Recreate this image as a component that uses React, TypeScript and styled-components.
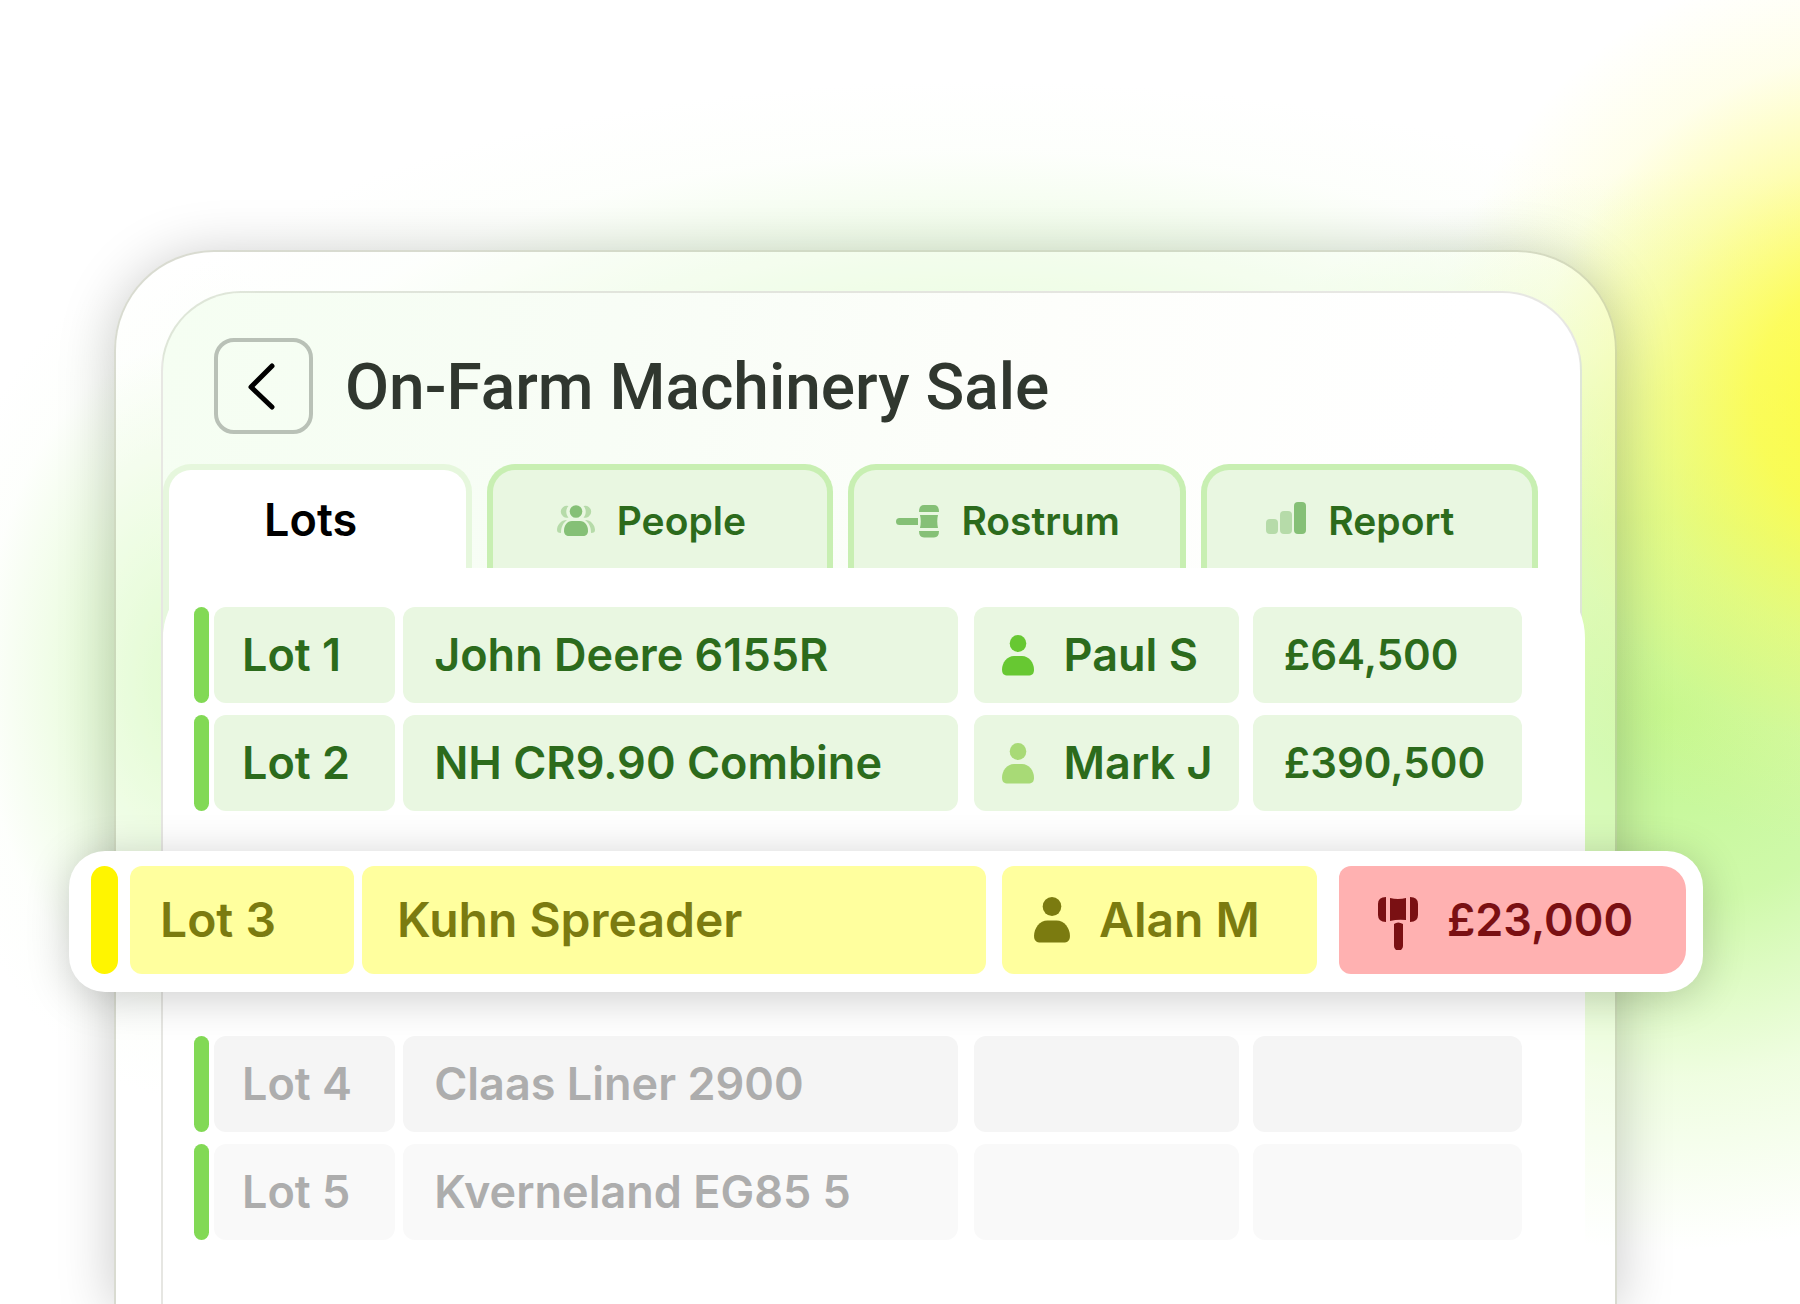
import React from "react";
import styled, { createGlobalStyle, css } from "styled-components";

const GlobalStyle = createGlobalStyle`
  *, *::before, *::after { box-sizing: border-box; }
  html, body { margin: 0; background: #fff; }
  body { overflow: hidden; font-family: Inter, "Noto Sans", sans-serif; }
`;

const Page = styled.main`
  min-height: 100vh;
  display: flex;
  padding: 250px 183px 0 114px;
  background:
    radial-gradient(ellipse 450px 450px at 1880px 400px, rgba(255, 252, 50, 0.92) 0%, rgba(255, 252, 64, 0.82) 28%, rgba(253, 252, 90, 0.46) 54%, rgba(253, 252, 130, 0.16) 77%, rgba(255, 252, 160, 0) 100%),
    radial-gradient(ellipse 600px 540px at 1670px 710px, rgba(186, 246, 132, 0.9) 0%, rgba(190, 247, 140, 0.74) 36%, rgba(205, 250, 160, 0.32) 68%, rgba(220, 250, 200, 0) 100%),
    radial-gradient(ellipse 900px 360px at 980px 440px, rgba(206, 248, 178, 0.8) 0%, rgba(216, 250, 196, 0.5) 45%, rgba(240, 253, 232, 0.15) 80%, rgba(255, 255, 255, 0) 100%),
    radial-gradient(ellipse 260px 420px at 190px 680px, rgba(200, 248, 168, 0.75) 0%, rgba(212, 249, 186, 0.45) 45%, rgba(240, 253, 232, 0.12) 80%, rgba(255, 255, 255, 0) 100%),
    #fff;
`;

const Device = styled.div`
  flex: 1;
  display: flex;
  padding: 39px 33px 0 45px;
  border: solid rgba(120, 125, 90, 0.28);
  border-width: 2px 2px 0;
  border-radius: 100px 100px 0 0;
  background: rgba(255, 255, 255, 0.25);
  box-shadow: 0 6px 56px rgba(0, 0, 0, 0.22);
`;

export default function App() {
  return (
    <>
      <GlobalStyle />
      <Page>
        <Device>
          <Screen>
            <Header>
              <BackButton type="button" aria-label="Back">
                <svg width="32" height="48" viewBox="0 0 32 48" fill="none" stroke="#000" strokeWidth="5" strokeLinecap="round" strokeLinejoin="round">
                  <path d="M26 4 5 25l21 20" />
                </svg>
              </BackButton>
              <Title>On-Farm Machinery Sale</Title>
            </Header>
            <Tabs role="tablist">
              <Tab role="tab" aria-selected="true" $active>Lots</Tab>
              <Tab role="tab" aria-selected="false"><PeopleIcon />People</Tab>
              <Tab role="tab" aria-selected="false"><GavelIcon />Rostrum</Tab>
              <Tab role="tab" aria-selected="false"><ChartIcon />Report</Tab>
            </Tabs>
            <Panel>
              <LotTable aria-label="Lots">
                <tbody>
                  {lots.map((lot) => (
                    <LotRow key={lot.no} $tone={lot.tone}>
                      <LotCell as="th" scope="row">{lot.no}</LotCell>
                      <LotCell>{lot.item}</LotCell>
                      <LotCell>
                        {lot.buyer && <><PersonIcon color={lot.mark} />{lot.buyer}</>}
                      </LotCell>
                      <LotCell>
                        {lot.tone === "live" && <HammerIcon />}
                        {lot.price}
                      </LotCell>
                    </LotRow>
                  ))}
                </tbody>
              </LotTable>
            </Panel>
          </Screen>
        </Device>
      </Page>
    </>
  );
}

type Tone = "sold" | "live" | "next" | "later";

const lots: { no: string; item: string; buyer?: string; price?: string; mark?: string; tone: Tone }[] = [
  { no: "Lot 1", item: "John Deere 6155R", buyer: "Paul S", price: "£64,500", mark: "#67c832", tone: "sold" },
  { no: "Lot 2", item: "NH CR9.90 Combine", buyer: "Mark J", price: "£390,500", mark: "#a8da76", tone: "sold" },
  { no: "Lot 3", item: "Kuhn Spreader", buyer: "Alan M", price: "£23,000", mark: "#7b7b10", tone: "live" },
  { no: "Lot 4", item: "Claas Liner 2900", tone: "next" },
  { no: "Lot 5", item: "Kverneland EG85 5", tone: "later" },
];

const tones = {
  sold: { fill: "#e9f7e1", ink: "#2c6b1c" },
  live: { fill: "#ffff9e", ink: "#7b7b10" },
  next: { fill: "#f5f5f5", ink: "#adadad" },
  later: { fill: "#f9f9f9", ink: "#adadad" },
};

const Screen = styled.section`
  flex: 1;
  min-width: 0;
  display: flex;
  flex-direction: column;
  border: solid rgba(120, 120, 100, 0.18);
  border-width: 2px 2px 0;
  border-radius: 80px 80px 0 0;
  background: linear-gradient(97deg, #f5fef2 0%, #f8fdf6 30%, #fdfefb 58%, #fff 85%);
`;

const Header = styled.header`
  display: flex;
  align-items: center;
  gap: 32px;
  padding: 45px 51px 30px;
`;

const BackButton = styled.button`
  display: grid;
  place-items: center;
  width: 99px;
  height: 96px;
  padding: 0 3px 0 0;
  border: 4px solid #b9c1b7;
  border-radius: 20px;
  background: transparent;
`;

const Title = styled.h1`
  margin: 0;
  padding-top: 4px;
  font-family: Roboto, Inter, sans-serif;
  font-size: 64px;
  line-height: 80px;
  font-weight: 500;
  color: #30372f;
  white-space: nowrap;
`;

const Tabs = styled.div`
  display: grid;
  grid-template-columns: 309fr 346fr 337fr 337fr;
  gap: 15px;
  padding: 0 42px 0 0;
  height: 104px;
`;

const Tab = styled.button<{ $active?: boolean }>`
  display: flex;
  align-items: center;
  justify-content: center;
  gap: 22px;
  padding: 4px 18px 0 0;
  height: 104px;
  border: 6px solid #c8efb2;
  border-bottom: 0;
  border-radius: 28px 28px 0 0;
  background: #e9f7e1;
  color: #2c6b1c;
  font: 600 39px/48px Inter, "Noto Sans", sans-serif;
  ${(p) =>
    p.$active &&
    css`
      height: 168px;
      padding: 2px 14px 64px 0;
      border-color: #e6f7dd;
      background: #fff;
      color: #000;
      font-size: 45px;
    `}
`;

const Panel = styled.div`
  flex: 1;
  position: relative;
  margin-right: -5px;
  padding: 39px 63px 60px 31px;
  border-radius: 70px 70px 0 0;
  background: #fff;
`;

const LotTable = styled.table`
  display: block;
  width: 100%;
  tbody { display: flex; flex-direction: column; gap: 12px; }
`;

const LotCell = styled.td`
  display: flex;
  align-items: center;
  min-width: 0;
  padding: 0 0 0 28px;
  border-radius: 12px;
  text-align: left;
  white-space: nowrap;
`;

const LotRow = styled.tr<{ $tone: Tone }>`
  display: grid;
  grid-template-columns: 15px 186fr 562fr 281fr 283fr;
  height: 96px;
  font-size: 45px;
  line-height: 56px;
  color: ${(p) => tones[p.$tone].ink};

  &::before { content: ""; border-radius: 14px; background: #82d955; }
  ${LotCell} { font-weight: 600; background: ${(p) => tones[p.$tone].fill}; }
  ${LotCell}:nth-child(1) { margin-left: 5px; }
  ${LotCell}:nth-child(2) { margin-left: 8px; padding-left: 31px; }
  ${LotCell}:nth-child(3) { margin-left: 16px; gap: 30px; }
  ${LotCell}:nth-child(4) { margin-left: 14px; padding-left: 31px; font-size: 42px; }

  ${(p) =>
    p.$tone === "live" &&
    css`
      position: relative;
      grid-template-columns: 27px 236fr 632fr 331fr 369fr;
      height: 141px;
      margin: 28px -181px 32px -125px;
      padding: 15px 17px 18px 22px;
      border-radius: 36px;
      background: #fff;
      box-shadow: 0 6px 44px rgba(0, 0, 0, 0.2);
      font-size: 48px;

      &::before { background: #fff500; }
      ${LotCell}:nth-child(1) { margin-left: 12px; padding-left: 30px; }
      ${LotCell}:nth-child(2) { padding-left: 35px; }
      ${LotCell}:nth-child(3) { padding-left: 32px; gap: 29px; }
      ${LotCell}:nth-child(4) {
        margin-left: 22px;
        padding-left: 38px;
        gap: 28px;
        border-radius: 12px 24px 24px 12px;
        background: #ffb1b1;
        color: #7a1013;
        font-size: 45px;
      }
      ${LotCell} svg { height: 46px; width: 36px; }
      ${LotCell}:nth-child(4) svg { height: 60px; width: 42px; }
    `}
`;

function PersonIcon({ color }: { color?: string }) {
  return (
    <svg width="32" height="41" viewBox="0 0 32 41" fill={color} aria-hidden="true">
      <ellipse cx="16" cy="8.500" rx="8.300" ry="8.500" />
      <path d="M12 21h8c7 0 12 7 12 13.500 0 4.500-2 6-6 6H6c-4 0-6-1.500-6-6C0 28 5 21 12 21z" />
    </svg>
  );
}

function PeopleIcon() {
  return (
    <svg width="38" height="32" viewBox="0 0 38 32" fill="#85c076" aria-hidden="true">
      <circle cx="19" cy="6.500" r="6.300" />
      <path d="M15 16h8c5 0 8 5 8 9.500 0 4-2 5.500-5 5.500H12c-3 0-5-1.500-5-5.500C7 21 10 16 15 16z" />
      <g fill="#b6dba9">
        <path d="M11.500 1a6 6 0 1 0 0 11.500c-3-3-3-8.500 0-11.500zM26.500 1a6 6 0 1 1 0 11.500c3-3 3-8.500 0-11.500z" />
        <path d="M10 15C4 15 0 20 0 25c0 2 1 3 4 3 0-6 2-10 6-13zM28 15c6 0 10 5 10 10 0 2-1 3-4 3 0-6-2-10-6-13z" />
      </g>
    </svg>
  );
}

function GavelIcon() {
  return (
    <svg width="43" height="33" viewBox="0 0 43 33" fill="#85c076" aria-hidden="true">
      <path d="M3.500 13H22v7H3.500a3.500 3.500 0 0 1 0-7z" />
      <path d="M28 0h10q5 0 5 7H23q0-7 5-7zM24 10h18q-1.500 6 0 13H24q1.500-7 0-13zM23 26h20q0 6.500-5 6.500H28q-5 0-5-6.500z" />
    </svg>
  );
}

function HammerIcon() {
  return (
    <svg width="42" height="60" viewBox="0 0 42 60" fill="#7a1013" aria-hidden="true">
      <path d="M9 7v25q-8 0-8-7V14q0-7 8-7zM13 8q8 2 16 0v22q-8-1-16 1zM33 7q8 0 8 7v11q0 7-8 7zM17 34q4-3 9 0v22a4.500 4.500 0 0 1-9 0z" />
    </svg>
  );
}

function ChartIcon() {
  return (
    <svg width="40" height="38" viewBox="0 0 40 38" fill="#b6dba9" aria-hidden="true">
      <rect y="17" width="12" height="15" rx="4" />
      <rect x="14" y="9" width="12" height="23" rx="4" />
      <rect x="28" width="12" height="32" rx="4" fill="#85c076" />
    </svg>
  );
}
